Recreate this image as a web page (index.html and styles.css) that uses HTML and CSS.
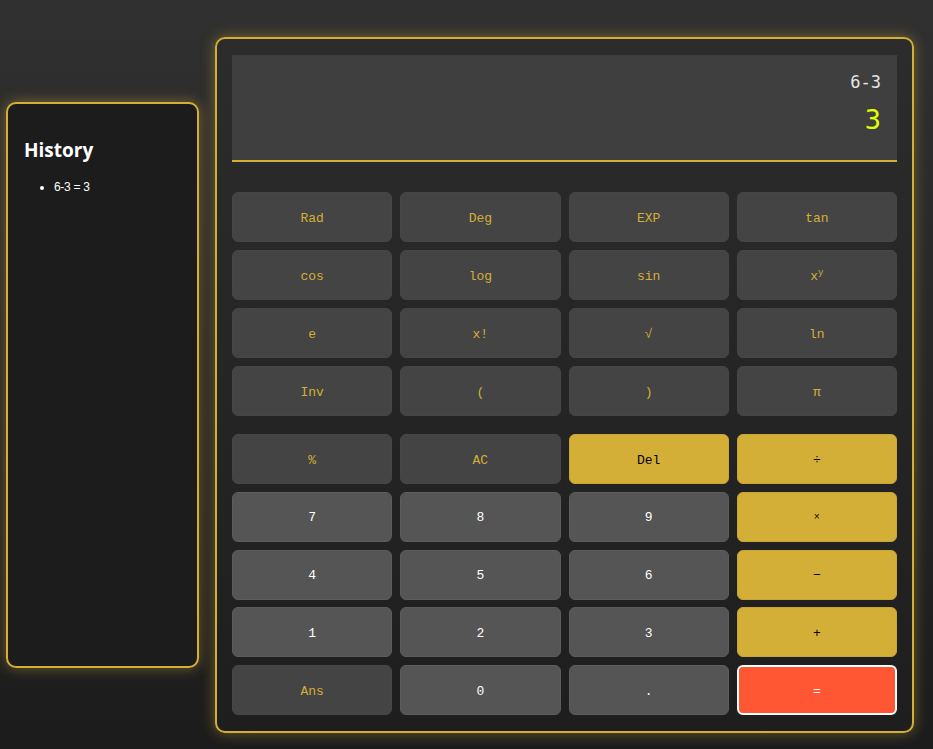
FILE: index.html
```html
<!DOCTYPE html>
<html>
<head>
<meta charset="utf-8">
<link rel="stylesheet" href="styles.css">
</head>
<body>
<div class="page">
  <aside class="history">
    <h2 class="history-title">History</h2>
    <ul class="history-list">
      <li>6-3 = 3</li>
    </ul>
  </aside>
  <main class="calc">
    <div class="display">
      <div class="expr">6-3</div>
      <div class="result">3</div>
    </div>
    <div class="grid sci">
      <button class="btn fn">Rad</button>
      <button class="btn fn">Deg</button>
      <button class="btn fn">EXP</button>
      <button class="btn fn">tan</button>
      <button class="btn fn">cos</button>
      <button class="btn fn">log</button>
      <button class="btn fn">sin</button>
      <button class="btn fn">x<sup>y</sup></button>
      <button class="btn fn">e</button>
      <button class="btn fn">x!</button>
      <button class="btn fn">√</button>
      <button class="btn fn">ln</button>
      <button class="btn fn">Inv</button>
      <button class="btn fn">(</button>
      <button class="btn fn">)</button>
      <button class="btn fn">π</button>
    </div>
    <div class="grid main">
      <button class="btn fn">%</button>
      <button class="btn fn">AC</button>
      <button class="btn op">Del</button>
      <button class="btn op">÷</button>
      <button class="btn num">7</button>
      <button class="btn num">8</button>
      <button class="btn num">9</button>
      <button class="btn op small">×</button>
      <button class="btn num">4</button>
      <button class="btn num">5</button>
      <button class="btn num">6</button>
      <button class="btn op">−</button>
      <button class="btn num">1</button>
      <button class="btn num">2</button>
      <button class="btn num">3</button>
      <button class="btn op">+</button>
      <button class="btn fn">Ans</button>
      <button class="btn num">0</button>
      <button class="btn num">.</button>
      <button class="btn eq">=</button>
    </div>
  </main>
</div>
</body>
</html>
```

FILE: styles.css
```css
html, body {
  margin: 0;
  padding: 0;
  height: 100%;
}
body {
  background: linear-gradient(to bottom, #303030 0%, #1c1c1c 100%);
  font-family: "Liberation Mono", "Courier New", monospace;
  overflow: hidden;
}
.page {
  box-sizing: border-box;
  height: 749px;
  padding: 21px 0 0 6px;
  display: flex;
  align-items: center;
  gap: 16px;
}
.history {
  box-sizing: border-box;
  width: 193px;
  height: 566px;
  background: #1c1c1c;
  border: 2px solid #d4af37;
  border-radius: 10px;
  box-shadow: 0 0 14px rgba(212, 175, 55, 0.45);
  padding: 16px 16px;
  color: #fff;
}
.history-title {
  font-family: "Open Sans", "Noto Sans", sans-serif;
  font-weight: 700;
  font-size: 19px;
  margin: 18px 0 16px 0;
  line-height: 24px;
}
.history-list {
  margin: 0;
  padding-left: 30px;
  font-family: "Liberation Sans", sans-serif;
  font-size: 12px;
  letter-spacing: -0.3px;
  line-height: 18px;
}
.calc {
  box-sizing: border-box;
  width: 699px;
  height: 696px;
  background: linear-gradient(to bottom, #2c2c2c 0%, #1e1e1e 100%);
  border: 2px solid #d4af37;
  border-radius: 10px;
  box-shadow: 0 0 14px rgba(212, 175, 55, 0.45);
  padding: 16px 15px;
  display: flex;
  flex-direction: column;
}
.display {
  box-sizing: border-box;
  height: 107px;
  background: #3f3f3f;
  border-bottom: 2px solid #d4af37;
  text-align: right;
  padding: 15px 16px 0 0;
  margin-bottom: 30px;
}
.expr {
  font-family: "DejaVu Sans Mono", monospace;
  color: #e6e6e6;
  font-size: 17px;
  line-height: 24px;
}
.result {
  font-family: "DejaVu Sans Mono", monospace;
  color: #e2ff00;
  font-size: 27px;
  line-height: 36px;
  margin-top: 8px;
}
.grid {
  display: grid;
  grid-template-columns: repeat(4, 1fr);
  column-gap: 8px;
}
.sci {
  grid-auto-rows: 50px;
  row-gap: 8px;
  margin-bottom: 18px;
}
.main {
  grid-auto-rows: 50px;
  row-gap: 7.75px;
}
.btn {
  box-sizing: border-box;
  border: 1px solid #4a4a4a;
  border-radius: 6px;
  font-family: "Liberation Mono", "Courier New", monospace;
  font-size: 13px;
  padding: 0;
  padding-top: 2px;
  cursor: pointer;
}
.btn sup {
  font-size: 9px;
  line-height: 0;
}
.fn {
  background: #444444;
  color: #d4af37;
  border-color: #464646;
}
.num {
  background: #555555;
  color: #ffffff;
  border-color: #5c5c5c;
}
.op {
  background: #d4af37;
  color: #000000;
  border-color: #caa634;
}
.small {
  font-size: 10px;
}
.eq {
  background: #ff5733;
  color: #ffffff;
  border: 2px solid #ffffff;
}
```
